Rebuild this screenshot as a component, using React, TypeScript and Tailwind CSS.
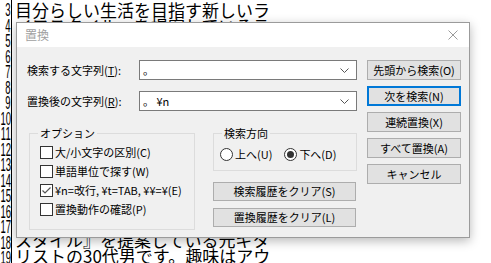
import React from "react";

const nums = [3, 4, 5, 6, 7, 8, 9, 10, 11, 12, 13, 14, 15, 16, 17, 18, 19];
const texts: Record<number, string> = {
  3: "目分らしい生活を目指す新しいラ",
  4: "イフスタイル』を提案しているテ",
  18: "スタイル』を提案している元ギタ",
  19: "リストの30代男です。趣味はアウ",
};

function Check({ checked }: { checked?: boolean }) {
  return (
    <span className="w-[13px] h-[13px] border border-[#333333] bg-white flex items-center justify-center shrink-0">
      {checked && (
        <svg width="11" height="11" viewBox="0 0 11 11">
          <path d="M1.5 5.5 L4 8 L9.5 2.5" stroke="#555555" strokeWidth="1.2" fill="none" />
        </svg>
      )}
    </span>
  );
}

function Radio({ on }: { on?: boolean }) {
  return (
    <span className="w-[13px] h-[13px] rounded-full border border-[#333333] bg-white flex items-center justify-center shrink-0">
      {on && <span className="w-[7px] h-[7px] rounded-full bg-[#333333]" />}
    </span>
  );
}

function Chevron() {
  return (
    <svg width="9" height="5" viewBox="0 0 9 5">
      <path d="M0.5 0.5 L4.5 4.5 L8.5 0.5" stroke="#555555" strokeWidth="1" fill="none" />
    </svg>
  );
}

function Btn({ children, focus, cls }: { children: React.ReactNode; focus?: boolean; cls?: string }) {
  return (
    <div
      className={
        "flex items-center justify-center bg-[#e1e1e1] text-[11px] leading-none text-black " +
        (focus ? "border-2 border-[#0078d7] " : "border border-[#adadad] ") +
        (cls ?? "")
      }
    >
      {children}
    </div>
  );
}

function Combo({ value }: { value: string }) {
  return (
    <div className="w-[218px] h-[20px] border border-[#7a7a7a] bg-white flex items-center pl-[3px] pr-[7px] justify-between">
      <span className="text-[11px] leading-none whitespace-pre">{value}</span>
      <Chevron />
    </div>
  );
}

export default function App() {
  return (
    <div className="relative w-[491px] h-[263px] overflow-hidden bg-white font-['Noto_Sans_CJK_JP',sans-serif] text-black">
      {/* editor */}
      <div className="flex h-full">
        <div className="w-[11px] pt-[2px] flex flex-col shrink-0">
          {nums.map((n) => (
            <div
              key={n}
              className="h-[15.5px] leading-[15.5px] text-[19px] flex justify-end font-['Liberation_Sans',sans-serif] whitespace-nowrap"
            >
              <span className="inline-block shrink-0 scale-x-50 origin-right">{n}</span>
            </div>
          ))}
        </div>
        <div className="border-l border-black pl-[3px] pt-[2px] flex-1 flex flex-col">
          {nums.map((n) => (
            <div key={n} className="h-[15.5px] leading-[15.5px] text-[17px] whitespace-nowrap">
              {texts[n] ?? ""}
            </div>
          ))}
        </div>
      </div>

      {/* dialog */}
      <div className="absolute left-[16px] top-[22px] w-[454px] h-[216px] border border-[#9b9b9b] bg-[#f0f0f0] shadow-[0_3px_10px_rgba(0,0,0,0.28)] flex flex-col">
        <div className="h-[24px] bg-white flex items-center justify-between pl-[8px] pr-[11px] shrink-0">
          <span className="text-[12px] leading-none text-[#a0a0a0]">置換</span>
          <svg width="10" height="10" viewBox="0 0 10 10">
            <path d="M0.5 0.5 L9.5 9.5 M9.5 0.5 L0.5 9.5" stroke="#9a9a9a" strokeWidth="1" />
          </svg>
        </div>
        <div className="flex pl-[10px] pt-[13px]">
          <div className="w-[330px] flex flex-col">
            <div className="flex items-center h-[20px]">
              <span className="w-[112px] text-[11px] leading-none">
                検索する文字列(<span className="underline">T</span>):
              </span>
              <Combo value="。" />
            </div>
            <div className="flex items-center h-[20px] mt-[11px]">
              <span className="w-[112px] text-[11px] leading-none">
                置換後の文字列(<span className="underline">R</span>):
              </span>
              <Combo value="。 ¥n" />
            </div>
            <div className="flex mt-[14px]">
              <fieldset className="ml-[2px] w-[166px] h-[105px] border border-[#dcdcdc] m-0 p-0">
                <legend className="ml-[8px] px-[2px] text-[11px] leading-[16px]">オプション</legend>
                <div className="pl-[10px] pt-[2px] flex flex-col text-[11px]">
                  <label className="h-[19px] flex items-center gap-[2px] leading-none">
                    <Check />
                    大/小文字の区別(C)
                  </label>
                  <label className="h-[19px] flex items-center gap-[2px] leading-none">
                    <Check />
                    単語単位で探す(W)
                  </label>
                  <label className="h-[19px] flex items-center gap-[2px] leading-none whitespace-nowrap">
                    <Check checked />
                    ¥n=改行, ¥t=TAB, ¥¥=¥(E)
                  </label>
                  <label className="h-[19px] flex items-center gap-[2px] leading-none">
                    <Check />
                    置換動作の確認(P)
                  </label>
                </div>
              </fieldset>
              <div className="ml-[18px] w-[144px] flex flex-col">
                <fieldset className="w-[144px] h-[46px] border border-[#dcdcdc] m-0 p-0">
                  <legend className="ml-[8px] px-[2px] text-[11px] leading-[16px]">検索方向</legend>
                  <div className="pl-[6px] pt-[4px] flex items-center h-[22px] text-[11px] leading-none">
                    <Radio />
                    <span className="ml-[2px]">上へ(U)</span>
                    <span className="ml-[12px]">
                      <Radio on />
                    </span>
                    <span className="ml-[2px]">下へ(D)</span>
                  </div>
                </fieldset>
                <Btn cls="mt-[11px] h-[19px] w-[143px]">検索履歴をクリア(S)</Btn>
                <Btn cls="mt-[7px] h-[19px] w-[143px]">置換履歴をクリア(L)</Btn>
              </div>
            </div>
          </div>
          <div className="ml-[10px] w-[94px] flex flex-col gap-[6px]">
            <Btn cls="h-[20px]">先頭から検索(O)</Btn>
            <Btn cls="h-[20px]" focus>
              次を検索(N)
            </Btn>
            <Btn cls="h-[20px]">連続置換(X)</Btn>
            <Btn cls="h-[20px]">すべて置換(A)</Btn>
            <Btn cls="h-[20px]">キャンセル</Btn>
          </div>
        </div>
      </div>
    </div>
  );
}
